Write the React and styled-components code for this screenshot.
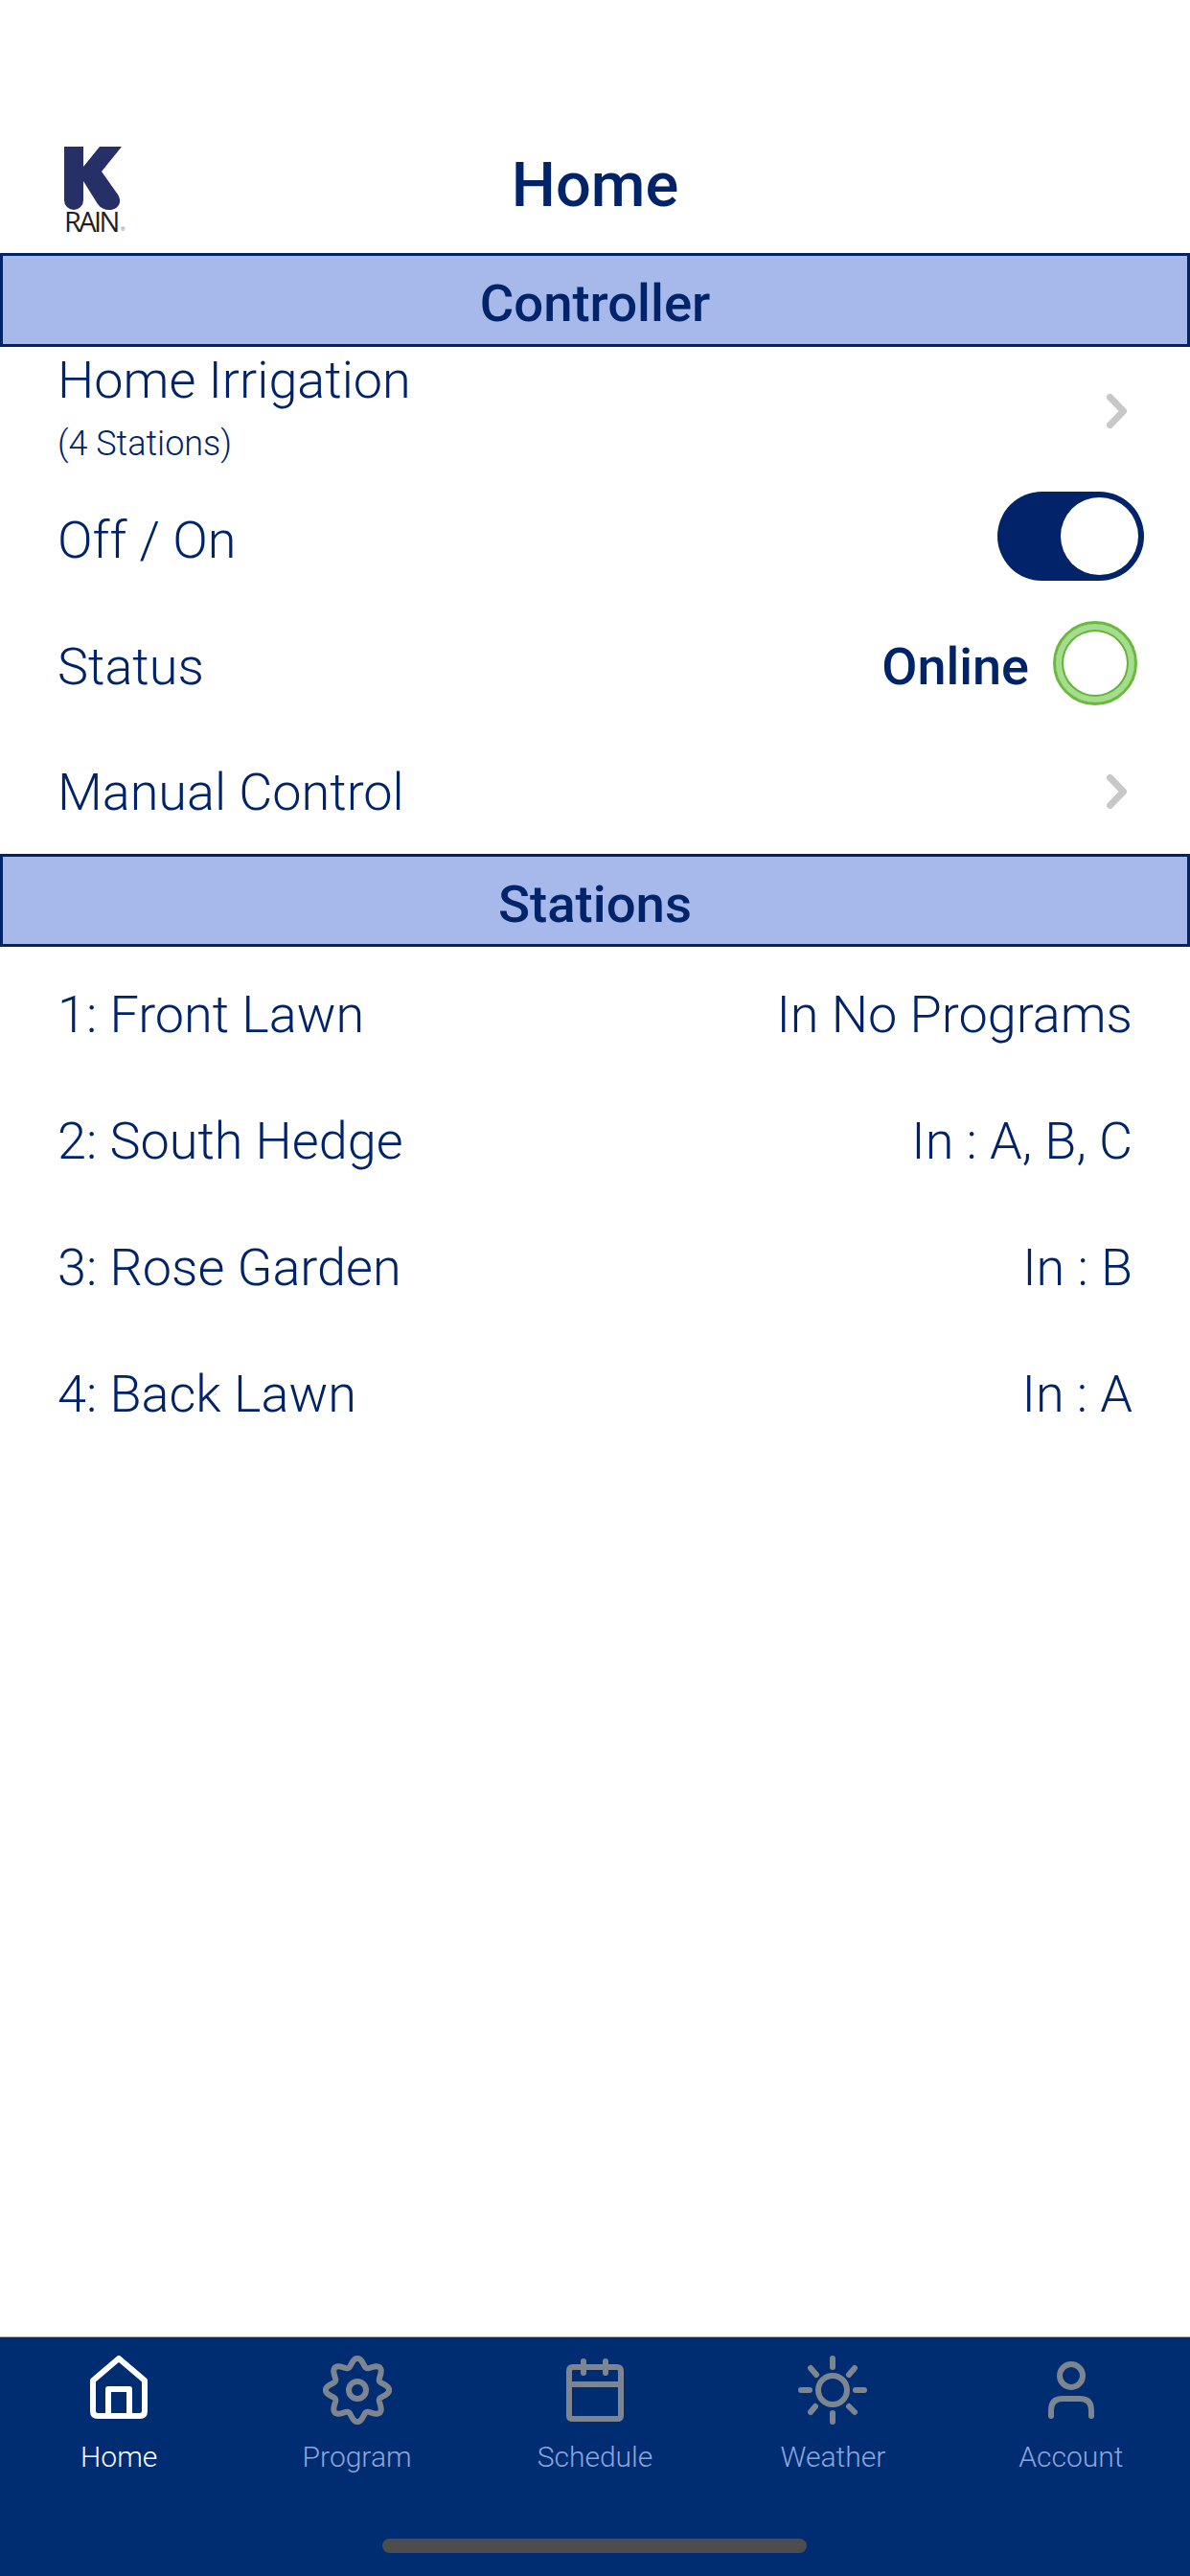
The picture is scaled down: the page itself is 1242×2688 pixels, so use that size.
import React from 'react';
import styled, { createGlobalStyle } from 'styled-components';

const navy = '#00236a';

const GlobalStyle = createGlobalStyle`
    html, body {
        margin: 0;
        padding: 0;
        background: #fff;
        font-family: Roboto, "Liberation Sans", sans-serif;
        color: ${navy};
    }
`;

const Page = styled.div`
    position: relative;
    display: flex;
    flex-direction: column;
    width: 1242px;
    height: 2688px;
    overflow: hidden;
`;

const Header = styled.header`
    display: grid;
    grid-template-columns: 1fr auto 1fr;
    align-items: end;
    height: 264px;
    box-sizing: border-box;
    padding-bottom: 21px;
`;

const Logo = styled.div`
    display: flex;
    flex-direction: column;
    width: 66px;
    margin-left: 67px;
    svg {
        display: block;
    }
`;

const LogoWord = styled.span`
    display: flex;
    align-items: flex-end;
    height: 24px;
    font-family: "Open Sans", sans-serif;
    font-weight: 400;
    font-size: 29px;
    line-height: 24px;
    letter-spacing: -2.6px;
    color: #231f20;
    sup {
        font-size: 6px;
        line-height: 8px;
        letter-spacing: 0;
        margin-left: 3px;
        color: #777;
    }
`;

const Title = styled.h1`
    margin: 0 0 12px;
    font-size: 65px;
    line-height: 75px;
    font-weight: 500;
    text-align: center;
`;

const SectionBar = styled.div`
    box-sizing: border-box;
    height: ${p => p.$h}px;
    padding-top: 3px;
    border: 3px solid ${navy};
    background: #a7b9ea;
    font-size: 54.5px;
    font-weight: 500;
    line-height: 92px;
    text-align: center;
`;

const Stack = styled.div`
    padding-top: ${p => p.$top || 0}px;
`;

const Row = styled.div`
    display: flex;
    align-items: center;
    justify-content: space-between;
    box-sizing: border-box;
    height: ${p => p.$h || 132}px;
    padding: 0 ${p => p.$right}px 0 60px;
    font-size: 54px;
    font-weight: 300;
    line-height: 66px;
`;

const Label = styled.span`
    margin-top: 3px;
`;

const Name = styled.div`
    display: flex;
    flex-direction: column;
    margin-bottom: 10px;
`;

const Sub = styled.span`
    font-size: 36px;
    line-height: 42px;
    margin-top: 12px;
`;

const Group = styled.div`
    display: flex;
    align-items: center;
    gap: 25px;
`;

const Strong = styled(Label)`
    font-weight: 500;
`;

const Toggle = styled.div`
    display: flex;
    justify-content: flex-end;
    box-sizing: border-box;
    width: 153px;
    height: 93px;
    padding: 6px;
    border-radius: 47px;
    background: ${navy};
    margin-top: -5px;
`;

const Knob = styled.div`
    width: 81px;
    height: 81px;
    border-radius: 50%;
    background: #fff;
`;

const StatusRing = styled.div`
    box-sizing: border-box;
    width: 88px;
    height: 88px;
    border-radius: 50%;
    border: 3px solid #68b93c;
    box-shadow: inset 0 0 0 6px #a6dc8d, inset 0 0 0 8px #62b537;
    margin-top: -4px;
`;

const Chevron = styled.svg`
    display: block;
    width: 21px;
    height: 36px;
    fill: none;
    stroke: #c8c8c8;
    stroke-width: 7;
    stroke-linecap: round;
    stroke-linejoin: round;
`;

const Spacer = styled.div`
    flex: 1;
`;

const TabBar = styled.nav`
    position: relative;
    display: grid;
    grid-template-columns: repeat(5, 1fr);
    box-sizing: border-box;
    height: 250px;
    padding-top: 19px;
    background: #002d72;
    border-top: 1px solid #aaa9a5;
`;

const Tab = styled.div`
    display: flex;
    flex-direction: column;
    align-items: center;
    font-size: 30px;
    font-weight: 300;
    line-height: 36px;
    color: ${p => (p.$active ? '#fff' : '#8ea4dc')};
`;

const TabIcon = styled.svg`
    display: block;
    width: 72px;
    height: 72px;
    margin-bottom: 16px;
    fill: none;
    stroke: ${p => (p.$active ? '#fff' : '#7d8590')};
    stroke-width: 6;
    stroke-linecap: round;
    stroke-linejoin: round;
`;

const HomeIndicator = styled.div`
    position: absolute;
    left: 399px;
    bottom: 24px;
    width: 443px;
    height: 15px;
    border-radius: 8px;
    background: #4d4d4d;
`;

// wavy outline of the cog, eight lobes
const gearPath = (() => {
    const pts = [];
    for (let i = 0; i < 160; i++) {
        const a = (i / 160) * Math.PI * 2;
        const r = 29 + 4.2 * Math.cos(8 * a);
        pts.push(`${(36 + r * Math.sin(a)).toFixed(2)} ${(36 - r * Math.cos(a)).toFixed(2)}`);
    }
    return `M${pts.join('L')}Z`;
})();

const HomeGlyph = () => (
    <>
        <path d="M36 6L63 29V61Q63 66 58 66H14Q9 66 9 61V29Z" transform="translate(0 -3)" />
        <path d="M25 62V35H47V62" />
    </>
);

const GearGlyph = () => (
    <>
        <path d={gearPath} />
        <circle cx="36" cy="36" r="9" />
    </>
);

const CalendarGlyph = () => (
    <>
        <path d="M13 12H59Q63 12 63 16V63Q63 66 59 66H13Q9 66 9 63V16Q9 12 13 12Z" />
        <path d="M9 30H63M24 6V18M47 6V18" />
    </>
);

const SunGlyph = () => (
    <>
        <circle cx="36" cy="36" r="15" />
        <path d="M36 3V12M36 60V69M3 36H12M60 36H69M13 13L19 20M59 13L53 20M13 59L18 53M59 59L53 53" />
    </>
);

const PersonGlyph = () => (
    <>
        <circle cx="36" cy="21" r="12" />
        <path d="M15 63V57Q15 45 27 45H45Q57 45 57 57V63" />
    </>
);

const tabs = [
    { label: 'Home', Glyph: HomeGlyph, active: true },
    { label: 'Program', Glyph: GearGlyph },
    { label: 'Schedule', Glyph: CalendarGlyph },
    { label: 'Weather', Glyph: SunGlyph },
    { label: 'Account', Glyph: PersonGlyph },
];

const stations = [
    { name: '1: Front Lawn', programs: 'In No Programs' },
    { name: '2: South Hedge', programs: 'In : A, B, C' },
    { name: '3: Rose Garden', programs: 'In : B' },
    { name: '4: Back Lawn', programs: 'In : A' },
];

const Arrow = () => (
    <Chevron viewBox="0 0 21 36">
        <path d="M3.5 3.5L17.5 18L3.5 32.5" />
    </Chevron>
);

export default function App() {
    return (
        <Page>
            <GlobalStyle />
            <Header>
                <Logo>
                    <svg width="60" height="66" viewBox="0 0 60 66">
                        <path
                            fill="#262f66"
                            d="M0 0H20V21L37 0H60L39 26L56 50C62 60 54 66 47 66C42 66 38 64 35 60L20 36V56A10 10 0 0 1 0 56Z"
                        />
                    </svg>
                    <LogoWord>RAIN<sup>®</sup></LogoWord>
                </Logo>
                <Title>Home</Title>
            </Header>

            <SectionBar $h={98}>Controller</SectionBar>
            <Row $h={134} $right={66}>
                <Name>
                    <span>Home Irrigation</span>
                    <Sub>(4 Stations)</Sub>
                </Name>
                <Arrow />
            </Row>
            <Row $right={48}>
                <Label>Off / On</Label>
                <Toggle><Knob /></Toggle>
            </Row>
            <Row $right={55}>
                <Label>Status</Label>
                <Group>
                    <Strong>Online</Strong>
                    <StatusRing />
                </Group>
            </Row>
            <Row $h={131} $right={66}>
                <Label>Manual Control</Label>
                <Arrow />
            </Row>

            <SectionBar $h={97}>Stations</SectionBar>
            <Stack $top={3}>
                {stations.map(s => (
                    <Row key={s.name} $right={60}>
                        <Label>{s.name}</Label>
                        <Label>{s.programs}</Label>
                    </Row>
                ))}
            </Stack>

            <Spacer />
            <TabBar>
                {tabs.map(({ label, Glyph, active }) => (
                    <Tab key={label} $active={active}>
                        <TabIcon viewBox="0 0 72 72" $active={active}>
                            <Glyph />
                        </TabIcon>
                        {label}
                    </Tab>
                ))}
                <HomeIndicator />
            </TabBar>
        </Page>
    );
}
